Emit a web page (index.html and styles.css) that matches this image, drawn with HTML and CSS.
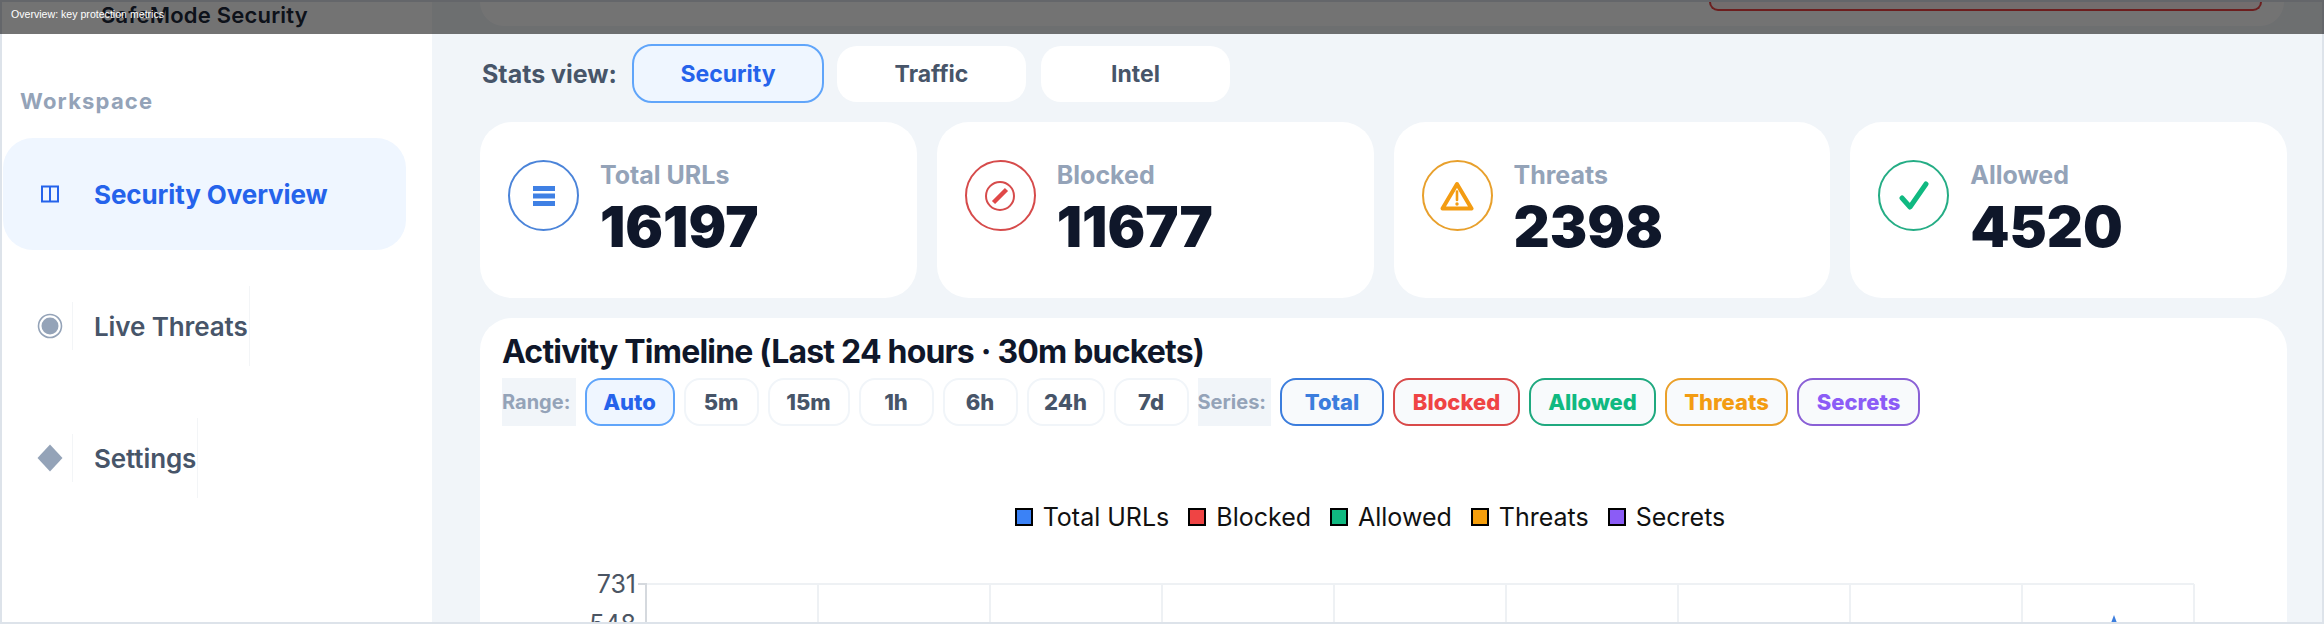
FILE: index.html
```html
<!DOCTYPE html>
<html>
<head>
<meta charset="utf-8">
<title>SafeMode Security</title>
<link rel="stylesheet" href="styles.css">
</head>
<body>
<div class="app">
    <aside class="sidebar">
        <div class="brand">SafeMode Security</div>
        <div class="side-title">Workspace</div>
        <nav class="nav">
            <a class="nav-item active">
                <span class="nav-ico">
                    <svg width="18" height="18" viewBox="0 0 18 18"><path d="M1 1.5h16v15H1zM9 1.5v15" fill="none" stroke="#2563eb" stroke-width="2"/></svg>
                </span>
                <span class="nav-label">Security Overview</span>
            </a>
            <a class="nav-item">
                <span class="nav-ico">
                    <svg width="26" height="26" viewBox="0 0 26 26"><circle cx="13" cy="13" r="11.5" fill="none" stroke="#94a3b8" stroke-width="1.6"/><circle cx="13" cy="13" r="8.5" fill="#94a3b8"/></svg>
                </span>
                <span class="nav-label">Live Threats</span>
            </a>
            <a class="nav-item">
                <span class="nav-ico">
                    <svg width="26" height="28" viewBox="0 0 26 28"><path d="M13 0.5 25.5 14 13 27.5 0.5 14z" fill="#94a3b8"/></svg>
                </span>
                <span class="nav-label">Settings</span>
            </a>
        </nav>
    </aside>

    <main class="main">
        <div class="topcard"><div class="danger-btn"></div></div>

        <div class="stats-switch">
            <span class="switch-label">Stats view:</span>
            <button class="switch-btn active">Security</button>
            <button class="switch-btn">Traffic</button>
            <button class="switch-btn">Intel</button>
        </div>

        <div class="stats">
            <div class="stat">
                <div class="stat-ico blue">
                    <svg width="22" height="20" viewBox="0 0 22 20"><path d="M0 0h22v5H0zM0 7.500h22v5H0zM0 15h22v5H0z" fill="#3f80e4"/></svg>
                </div>
                <div>
                    <div class="stat-label">Total URLs</div>
                    <div class="stat-value">16197</div>
                </div>
            </div>
            <div class="stat">
                <div class="stat-ico red">
                    <svg width="32" height="32" viewBox="0 0 32 32"><circle cx="16" cy="16" r="14" fill="none" stroke="#d64b4b" stroke-width="2"/><path d="M9.500 22.500 22.500 9.500" stroke="#e04848" stroke-width="4.500"/></svg>
                </div>
                <div>
                    <div class="stat-label">Blocked</div>
                    <div class="stat-value">11677</div>
                </div>
            </div>
            <div class="stat">
                <div class="stat-ico amber">
                    <svg width="34" height="30" viewBox="0 0 34 30"><path d="M17 3 31.500 27.500H2.500z" fill="none" stroke="#f39c12" stroke-width="4" stroke-linejoin="round"/><path d="M17 10.500v8.500" stroke="#f39c12" stroke-width="2.600" stroke-linecap="round"/><circle cx="17" cy="23" r="1.700" fill="#f39c12"/></svg>
                </div>
                <div>
                    <div class="stat-label">Threats</div>
                    <div class="stat-value">2398</div>
                </div>
            </div>
            <div class="stat">
                <div class="stat-ico green">
                    <svg width="30" height="30" viewBox="0 0 30 30"><path d="M3 17 11 26 27 3" fill="none" stroke="#10b981" stroke-width="5" stroke-linecap="round" stroke-linejoin="round"/></svg>
                </div>
                <div>
                    <div class="stat-label">Allowed</div>
                    <div class="stat-value">4520</div>
                </div>
            </div>
        </div>

        <section class="timeline">
            <h2 class="timeline-title">Activity Timeline (Last 24 hours · 30m buckets)</h2>
            <div class="filters">
                <span class="filter-label">Range:</span>
                <button class="chip on">Auto</button>
                <button class="chip w74">5m</button>
                <button class="chip w82">15m</button>
                <button class="chip w74">1h</button>
                <button class="chip w74">6h</button>
                <button class="chip w78">24h</button>
                <button class="chip w74">7d</button>
                <span class="filter-label">Series:</span>
                <button class="chip series s-total">Total</button>
                <button class="chip series s-blocked">Blocked</button>
                <button class="chip series s-allowed">Allowed</button>
                <button class="chip series s-threats">Threats</button>
                <button class="chip series s-secrets">Secrets</button>
            </div>
            <div class="legend">
                <span class="legend-item"><i class="swatch c-total"></i>Total URLs</span>
                <span class="legend-item"><i class="swatch c-blocked"></i>Blocked</span>
                <span class="legend-item"><i class="swatch c-allowed"></i>Allowed</span>
                <span class="legend-item"><i class="swatch c-threats"></i>Threats</span>
                <span class="legend-item"><i class="swatch c-secrets"></i>Secrets</span>
            </div>
            <svg class="chart" width="1730" height="70" viewBox="0 0 1730 70">
                <g stroke="#eef1f4" stroke-width="2">
                    <path d="M144 13H1692"/>
                    <path d="M316 13V70M488 13V70M660 13V70M832 13V70M1004 13V70M1176 13V70M1348 13V70M1520 13V70M1692 13V70"/>
                </g>
                <path d="M144 12V70" stroke="#d5d9de" stroke-width="2"/>
                <path d="M136 13H144M136 54H144" stroke="#d5d9de" stroke-width="2"/>
                <path d="M1606 60 1612 44 1618 60z" fill="#3b7ddd"/>
                <text class="tick" x="134" y="22" text-anchor="end">731</text>
                <text class="tick" x="134" y="62" text-anchor="end">548</text>
            </svg>
        </section>
    </main>
</div>

<div class="tooltip-bar">Overview: key protection metrics</div>
</body>
</html>
```

FILE: styles.css
```css
* {box-sizing:border-box;}
html, body {margin:0;padding:0;width:2324px;height:624px;overflow:hidden;}
body {font-family:Inter,"Noto Sans",sans-serif;background:#fff;color:#0f172a;position:relative;}
button {font-family:inherit;cursor:pointer;}

.app {display:flex;height:624px;border:2px solid #dde3ea;overflow:hidden;}

/* sidebar */
.sidebar {width:430px;flex:none;background:#fff;}
.brand {height:30px;line-height:27px;padding-left:99px;font-size:22px;font-weight:600;letter-spacing:.2px;color:#1e293b;}
.side-title {margin-top:56px;padding-left:18px;height:26px;line-height:26px;font-size:22px;font-weight:700;letter-spacing:1.2px;color:#94a3b8;}
.nav {display:flex;flex-direction:column;gap:20px;margin-top:24px;}
.nav-item {display:flex;align-items:center;width:403px;height:112px;margin-left:1px;padding-left:33px;border-radius:30px;}
.nav-item.active {background:#eff6ff;}
.nav-ico {width:37px;height:48px;display:flex;align-items:center;justify-content:center;padding-right:8px;border-right:1px solid #f3f5f7;}
.nav-item.active .nav-ico {border-right-color:transparent;}
.nav-label {margin-left:21px;height:80px;line-height:82px;font-size:26px;font-weight:600;letter-spacing:-.1px;color:#475569;padding-right:1px;border-right:1px solid #f3f5f7;}
.nav-item.active .nav-label {color:#2563eb;font-weight:700;border-right:0;}

/* main column */
.main {flex:1;min-width:0;background:#f1f5f9;padding:0 35px 0 48px;overflow:hidden;}
.topcard {height:24px;background:#fff;border-radius:0 0 26px 26px;display:flex;justify-content:flex-end;padding-right:22px;margin-right:3px;}
.danger-btn {width:553px;height:9px;background:#fef2f2;border:2px solid #ef4444;border-top:0;border-radius:0 0 14px 14px;}

.stats-switch {display:flex;align-items:center;height:59px;margin-top:18px;padding-left:2px;}
.switch-label {width:150px;font-size:25px;font-weight:700;color:#475569;}
.switch-btn {width:189px;height:56px;margin-right:15px;border:0;border-radius:20px;background:#fff;font-size:23px;font-weight:700;color:#475569;}
.switch-btn.active {width:192px;height:59px;margin-right:13px;border:2px solid #60a5fa;background:#eff6ff;color:#2563eb;}

.stats {display:grid;grid-template-columns:repeat(4,1fr);gap:20px;margin-top:19px;}
.stat {height:176px;padding:38px 28px 0;background:#fff;border-radius:32px;display:flex;gap:21px;}
.stat-ico {width:71px;height:71px;flex:none;border:2px solid;border-radius:50%;display:flex;align-items:center;justify-content:center;}
.stat-ico.blue {border-color:#4b84d9;}
.stat-ico.red {border-color:#d64b4b;}
.stat-ico.amber {border-color:#e8a02c;}
.stat-ico.green {border-color:#25ad85;}
.stat-label {font-size:25px;line-height:31px;font-weight:700;color:#94a3b8;}
.stat-value {font-size:56px;line-height:62px;font-weight:900;color:#0f172a;margin-top:5px;}

/* timeline */
.timeline {height:400px;margin-top:20px;padding:0 22px;background:#fff;border-radius:32px 32px 0 0;}
.timeline-title {margin:0;height:60px;padding-top:15px;line-height:38px;font-size:32px;font-weight:700;letter-spacing:-.8px;color:#0f172a;}
.filters {display:flex;align-items:center;gap:9px;height:48px;}
.filter-label {width:73.5px;height:48px;line-height:48px;background:#f1f5f9;font-size:20px;font-weight:700;color:#94a3b8;}
.chip {width:90px;height:48px;padding:0;border:2px solid #f1f5f9;border-radius:16px;background:#fff;font-size:22px;font-weight:800;color:#475569;}
.chip.on {border-color:#60a5fa;background:#eff6ff;color:#2563eb;}
.chip.w74 {width:75px;}
.chip.w78 {width:78px;}
.chip.w82 {width:82px;}
.series {background:#f8fafc;}
.s-total {width:104px;color:#3b7ddd;border-color:#3b7ddd;}
.s-blocked {width:127px;color:#ef4444;border-color:#d94a4a;}
.s-allowed {width:127px;color:#10b981;border-color:#1fa97f;}
.s-threats {width:123px;color:#f39c12;border-color:#eaa02a;}
.s-secrets {width:123px;color:#8b5cf6;border-color:#8a60d6;}

.legend {display:flex;justify-content:center;gap:19px;margin-top:77px;height:28px;align-items:center;padding-right:27px;}
.legend-item {display:flex;align-items:center;gap:10px;font-size:25px;color:#111;}
.swatch {width:18px;height:18px;border:2px solid #000;}
.c-total {background:#3b82f6;}
.c-blocked {background:#ef4444;}
.c-allowed {background:#10b981;}
.c-threats {background:#f59e0b;}
.c-secrets {background:#8b5cf6;}

.chart {display:block;margin-top:40px;}
.tick {font-family:Inter,"Noto Sans",sans-serif;font-size:25px;fill:#4b5563;}

/* hint strip lies over the page */
.tooltip-bar {position:absolute;left:0;top:0;width:100%;height:34px;padding:8px 0 0 11px;background:rgba(0,0,0,.55);color:#fff;font-family:"Liberation Sans",Arial,sans-serif;font-size:10.6px;line-height:13px;}
```
